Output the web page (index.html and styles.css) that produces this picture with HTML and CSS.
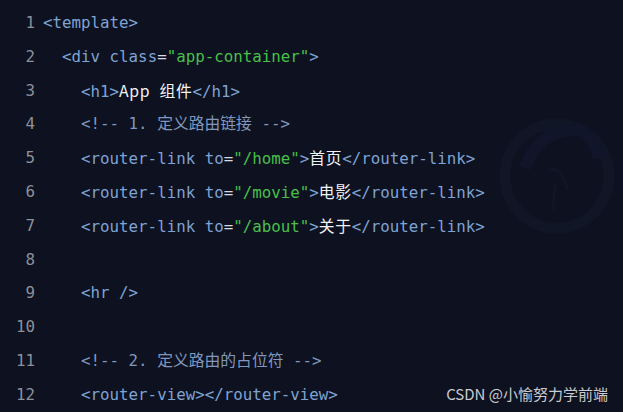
FILE: index.html
```html
<!DOCTYPE html>
<html>
<head>
<meta charset="utf-8">
<link rel="stylesheet" href="styles.css">
</head>
<body>
<div class="editor">
  <div class="line"><span class="ln">1</span><span class="code"><span class="t">&lt;template&gt;</span></span></div>
  <div class="line"><span class="ln">2</span><span class="code">  <span class="t">&lt;div class</span><span class="p">=</span><span class="s">"app-container"</span><span class="t">&gt;</span></span></div>
  <div class="line"><span class="ln">3</span><span class="code">    <span class="t">&lt;h1&gt;</span><span class="w">App</span><span class="p"> </span><span class="w">组件</span><span class="t">&lt;/h1&gt;</span></span></div>
  <div class="line"><span class="ln">4</span><span class="code">    <span class="c">&lt;!-- 1. 定义路由链接 --&gt;</span></span></div>
  <div class="line"><span class="ln">5</span><span class="code">    <span class="t">&lt;router-link to</span><span class="p">=</span><span class="s">"/home"</span><span class="t">&gt;</span><span class="w">首页</span><span class="t">&lt;/router-link&gt;</span></span></div>
  <div class="line"><span class="ln">6</span><span class="code">    <span class="t">&lt;router-link to</span><span class="p">=</span><span class="s">"/movie"</span><span class="t">&gt;</span><span class="w">电影</span><span class="t">&lt;/router-link&gt;</span></span></div>
  <div class="line"><span class="ln">7</span><span class="code">    <span class="t">&lt;router-link to</span><span class="p">=</span><span class="s">"/about"</span><span class="t">&gt;</span><span class="w">关于</span><span class="t">&lt;/router-link&gt;</span></span></div>
  <div class="line"><span class="ln">8</span><span class="code"></span></div>
  <div class="line"><span class="ln">9</span><span class="code">    <span class="t">&lt;hr /&gt;</span></span></div>
  <div class="line"><span class="ln">10</span><span class="code"></span></div>
  <div class="line"><span class="ln">11</span><span class="code">    <span class="c">&lt;!-- 2. 定义路由的占位符 --&gt;</span></span></div>
  <div class="line"><span class="ln">12</span><span class="code">    <span class="t">&lt;router-view&gt;&lt;/router-view&gt;</span></span></div>
</div>
<svg class="mark" width="124" height="150" viewBox="0 0 124 150">
  <circle cx="58" cy="70" r="52" fill="none" stroke="#111627" stroke-width="11"/>
  <path d="M26 62 Q40 22 80 24 Q96 32 100 52" fill="none" stroke="#10152a" stroke-width="12"/>
  <path d="M50 64 Q64 60 68 84 M56 78 L54 104" fill="none" stroke="#111627" stroke-width="3"/>
</svg>
<div class="credit">CSDN @小愉努力学前端</div>
</body>
</html>
```
FILE: styles.css
```css
html, body {
  margin: 0;
  padding: 0;
  background: #0d1120;
  width: 623px;
  height: 412px;
  overflow: hidden;
}
.editor {
  padding-top: 6px;
  font-family: "DejaVu Sans Mono", "Noto Sans CJK SC", monospace;
  font-size: 15.8px;
}
.line {
  display: flex;
  height: 33.8px;
  line-height: 33.8px;
  gap: 8px;
}
.ln {
  width: 35px;
  text-align: right;
  color: #8c9099;
  flex: none;
}
.code {
  white-space: pre;
  color: #e6e6e6;
}
.t { color: #7fa3d3; }
.c { color: #8197bd; }
.p { color: #d8dbe2; }
.s { color: #48c048; }
.w { color: #f2f2f2; font-family: "Noto Sans CJK SC", "DejaVu Sans", sans-serif; letter-spacing: 0.6px; }
.mark {
  position: absolute;
  left: 499px;
  top: 106px;
}
.credit {
  position: absolute;
  right: 15px;
  bottom: 8px;
  font-family: "Noto Sans CJK SC", "Noto Sans", sans-serif;
  font-size: 15px;
  color: #c9cbd0;
}
```
